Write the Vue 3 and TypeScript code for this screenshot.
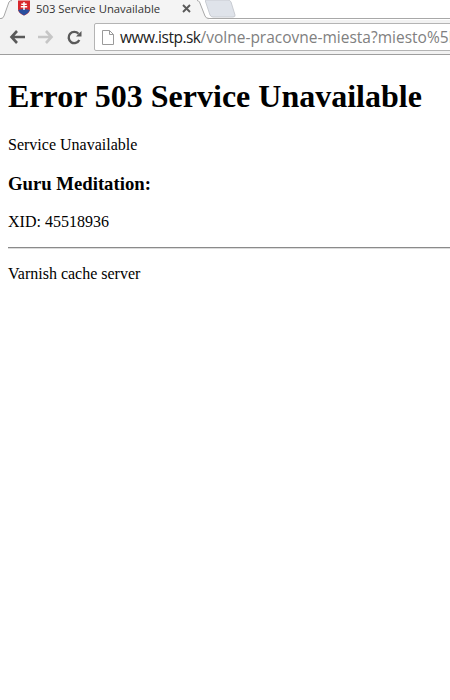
<template>
  <div class="browser">
    <div class="tab-strip">
      <svg class="tab-edge" width="19" height="20" viewBox="0 0 19 20">
        <path d="M0 19 L2 19 Q4 19 5 16 L10 2 Q11 0 13 0 L19 0 L19 20 L0 20 Z" fill="#f4f4f4" />
        <path d="M0 18.5 L2 18.5 Q4 18.5 5 16 L10 2 Q11 .5 13 .5" fill="none" stroke="#a8a8a8" />
      </svg>
      <div class="tab">
        <svg class="favicon" width="14" height="16" viewBox="0 0 14 16">
          <path d="M1 0.5 H13 V9 Q13 13 7 15.5 Q1 13 1 9 Z" fill="#d8262c" />
          <path d="M1.2 10.5 Q2 9 4 9.5 Q7 8 10 9.5 Q12 9 12.8 10.5 Q11.5 13.5 7 15.5 Q2.5 13.5 1.2 10.5 Z" fill="#2a4f9e" />
          <path d="M6.3 2 H7.7 V3.5 H9.7 V4.9 H7.7 V6 H10.2 V7.4 H7.7 V10 H6.3 V7.4 H3.8 V6 H6.3 V4.9 H4.3 V3.5 H6.3 Z" fill="#fff" />
        </svg>
        <span class="tab-title">503 Service Unavailable</span>
        <svg class="tab-close" width="9" height="9" viewBox="0 0 9 9">
          <path d="M1 1 L8 8 M8 1 L1 8" stroke="#5a5a5a" stroke-width="1.9" />
        </svg>
      </div>
      <svg class="tab-edge-right" width="13" height="20" viewBox="0 0 13 20">
        <path d="M0 0 L1 0 Q2.5 0 3.5 2 L9 16 Q10 18.5 13 18.5 L13 20 L0 20 Z" fill="#f4f4f4" />
        <path d="M1 .5 Q2.5 .5 3.5 2 L9 16 Q10 18.5 13 18.5" fill="none" stroke="#a8a8a8" />
      </svg>
      <svg class="new-tab" width="31" height="20" viewBox="0 0 31 20">
        <path d="M0 0 H23 Q25 0 26 2 L30 15 Q30.5 17 28 17 H8 Q6 17 5 15 Z" fill="#dfe3ea" stroke="#c9ccd2" />
      </svg>
      <div class="strip-line"></div>
    </div>

    <div class="toolbar">
      <svg class="nav-icon" width="16" height="14" viewBox="0 0 16 14">
        <path d="M8 1 L2.5 7 L8 13 M3 7 H16" fill="none" stroke="#5a5a5a" stroke-width="2.6" />
      </svg>
      <svg class="nav-icon" width="16" height="14" viewBox="0 0 16 14">
        <path d="M8 1 L13.5 7 L8 13 M13 7 H0" fill="none" stroke="#c6c6c6" stroke-width="2.6" />
      </svg>
      <svg class="nav-icon reload" width="15" height="15" viewBox="0 0 15 15">
        <path d="M12.3 10 A5.6 5.6 0 1 1 11.5 3.8" fill="none" stroke="#5a5a5a" stroke-width="2.4" />
        <path d="M9 6.5 L14.5 6.5 L14.5 1 Z" fill="#5a5a5a" />
      </svg>
      <div class="omnibox">
        <svg class="page-icon" width="12" height="15" viewBox="0 0 12 15">
          <path d="M.5 .5 H7.5 L11.5 4.5 V14.5 H.5 Z M7.5 .5 V4.5 H11.5" fill="#fff" stroke="#9a9a9a" />
        </svg>
        <span class="url"><span class="host">www.istp.sk</span>/volne-pracovne-miesta?miesto%5D</span>
      </div>
    </div>

    <main class="page">
      <h1>Error 503 Service Unavailable</h1>
      <p>Service Unavailable</p>
      <h3>Guru Meditation:</h3>
      <p>XID: 45518936</p>
      <hr />
      <p>Varnish cache server</p>
    </main>
  </div>
</template>

<script setup lang="ts">
</script>

<style>
html, body {
  margin: 0;
  background: #fff;
}
</style>

<style scoped>
.browser {
  width: 450px;
  height: 700px;
  overflow: hidden;
  background: #fff;
}

.tab-strip {
  position: relative;
  display: flex;
  height: 20px;
  overflow: hidden;
}

.tab-edge {
  flex: none;
  margin-left: -1px;
  z-index: 1;
}

.tab {
  display: flex;
  align-items: center;
  width: 178px;
  flex: none;
  height: 20px;
  background: #f4f4f4;
  z-index: 1;
}

.favicon {
  flex: none;
  margin-top: -4px;
  margin-left: -1px;
}

.tab-title {
  margin-left: 5px;
  margin-top: -3px;
  font: 11.3px "Open Sans", "Liberation Sans", sans-serif;
  color: #333;
  white-space: nowrap;
}

.tab-close {
  flex: none;
  margin-left: auto;
  margin-right: 5px;
  margin-top: -3px;
}

.tab-edge-right {
  flex: none;
  z-index: 1;
}

.new-tab {
  flex: none;
  margin-left: -4px;
}

.strip-line {
  position: absolute;
  left: 0;
  right: 0;
  bottom: 1px;
  height: 1px;
  background: #a8a8a8;
}

.toolbar {
  display: flex;
  align-items: center;
  height: 35px;
  box-sizing: border-box;
  background: #f2f2f2;
  border-bottom: 1px solid #9e9e9e;
  padding-left: 9px;
}

.nav-icon {
  flex: none;
  margin-right: 13px;
}

.reload {
  margin-right: 12px;
}

.omnibox {
  display: flex;
  align-items: center;
  flex: 1;
  min-width: 0;
  height: 26px;
  margin-right: -20px;
  padding-left: 7px;
  background: #fff;
  border: 1px solid #b4b4b4;
  border-radius: 2px;
  overflow: hidden;
}

.page-icon {
  flex: none;
}

.url {
  margin-left: 6px;
  font: 15.5px "Open Sans", "Liberation Sans", sans-serif;
  color: #808080;
  white-space: nowrap;
}

.host {
  color: #222;
  letter-spacing: -0.5px;
}

.page {
  padding: 2px 8px 0;
  font-family: "Liberation Serif", serif;
  font-size: 16px;
  color: #000;
}

h1 {
  margin: 21px 0;
  font-size: 32px;
}

h3 {
  margin: 18.72px 0;
  font-size: 18.72px;
}

p {
  margin: 16px 0;
}

hr {
  margin: 8px -8px 8px 0;
  height: 0;
  border: none;
  border-top: 1px solid #8a8a8a;
  border-bottom: 1px solid #dcdcdc;
}
</style>
